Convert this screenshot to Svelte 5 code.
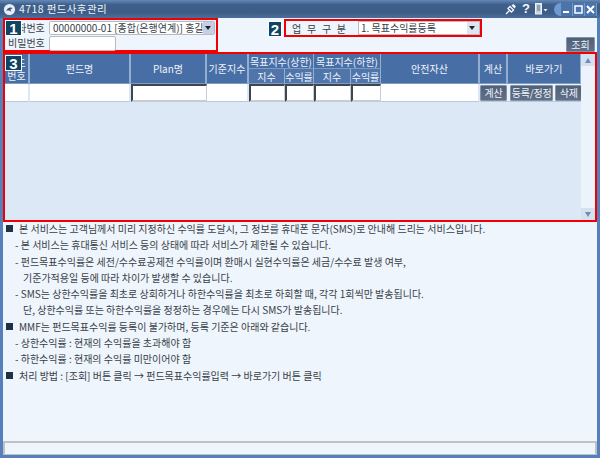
<script lang="ts">
  const notes = [
    { kind: "main", text: "본 서비스는 고객님께서 미리 지정하신 수익률 도달시, 그 정보를 휴대폰 문자(SMS)로 안내해 드리는 서비스입니다." },
    { kind: "minor", text: "- 본 서비스는 휴대통신 서비스 등의 상태에 따라 서비스가 제한될 수 있습니다." },
    { kind: "minor", text: "- 펀드목표수익률은 세전/수수료공제전 수익률이며 환매시 실현수익률은 세금/수수료 발생 여부," },
    { kind: "cont", text: "기준가적용일 등에 따라 차이가 발생할 수 있습니다." },
    { kind: "minor", text: "- SMS는 상한수익률을 최초로 상회하거나 하한수익률을 최초로 하회할 때, 각각 1회씩만 발송됩니다." },
    { kind: "cont", text: "단, 상한수익률 또는 하한수익률을 정정하는 경우에는 다시 SMS가 발송됩니다." },
    { kind: "main", text: "MMF는 펀드목표수익률 등록이 불가하며, 등록 기준은 아래와 같습니다." },
    { kind: "minor", text: "- 상한수익률 : 현재의 수익률을 초과해야 함" },
    { kind: "minor", text: "- 하한수익률 : 현재의 수익률 미만이어야 함" },
    { kind: "main", text: "처리 방법 : [조회] 버튼 클릭 → 펀드목표수익률입력 → 바로가기 버튼 클릭" }
  ];
</script>

<div class="window">
  <header class="titlebar">
    <svg class="app-icon" viewBox="0 0 14 14" aria-hidden="true">
      <circle cx="7" cy="7" r="6" fill="#e8eef6" />
      <path d="M3.5 8.5c1-3 4-4.500 7-3l-2.500 1.500 1 2.500c-2-1.500-3.500-1.500-5.500-1z" fill="#34547c" />
    </svg>
    <span class="title">4718 펀드사후관리</span>
    <div class="tools">
      <svg width="12" height="12" viewBox="0 0 12 12" aria-hidden="true">
        <path d="M1 11l3.500-3.500M7 2L10 5M5 3.500l3.500 3.500-2 2-3.500-3.500zM8 1.500l2.500 2.500" fill="none" stroke="#f2f5f9" stroke-width="1.400" />
      </svg>
      <span class="help">?</span>
      <svg width="13" height="12" viewBox="0 0 13 12" aria-hidden="true">
        <rect x="0.500" y="0.500" width="6" height="10.500" fill="#c9d3df" stroke="#eef2f7" />
        <path d="M2 3h3M2 5h3M2 7h3" stroke="#55708f" />
        <path d="M8.500 6h4l-2 2.500z" fill="#eef2f7" />
      </svg>
      <div class="win-buttons">
        <span class="win-btn">
          <svg width="9" height="9" viewBox="0 0 9 9" aria-hidden="true"><rect x="1" y="6" width="6" height="2" fill="#fff" /></svg>
        </span>
        <span class="win-btn">
          <svg width="9" height="9" viewBox="0 0 9 9" aria-hidden="true"><rect x="1" y="1" width="7" height="7" fill="none" stroke="#fff" stroke-width="1.500" /></svg>
        </span>
        <span class="win-btn">
          <svg width="9" height="9" viewBox="0 0 9 9" aria-hidden="true"><path d="M1 1l7 7M8 1l-7 7" stroke="#fff" stroke-width="2" /></svg>
        </span>
      </div>
    </div>
  </header>

  <section class="filters">
    <div class="box-one">
      <span class="badge badge-one">1</span>
      <div class="field-row">
        <span class="label">계좌번호</span>
        <div class="select account">
          <span class="select-text">00000000-01 [종합(은행연계)] 홍길동</span>
          <span class="arrow"></span>
        </div>
      </div>
      <div class="field-row">
        <span class="label">비밀번호</span>
        <div class="password"></div>
      </div>
    </div>

    <div class="work-area">
      <span class="badge-two">2</span>
      <div class="box-two">
        <span class="work-label">업 무 구 분</span>
        <div class="select work">
          <span class="select-text">1. 목표수익률등록</span>
          <span class="arrow"></span>
        </div>
      </div>
    </div>

    <button class="btn search">조회</button>
  </section>

  <section class="box-three">
    <span class="badge badge-three">3</span>
    <div class="table-wrap">
      <div class="grid">
        <div class="th span2 stacked">펀드<br />번호</div>
        <div class="th span2">펀드명</div>
        <div class="th span2">Plan명</div>
        <div class="th span2">기준지수</div>
        <div class="th wide">목표지수(상한)</div>
        <div class="th wide">목표지수(하한)</div>
        <div class="th span2">안전자산</div>
        <div class="th span2">계산</div>
        <div class="th span2">바로가기</div>
        <div class="th sub">지수</div>
        <div class="th sub">수익률</div>
        <div class="th sub">지수</div>
        <div class="th sub">수익률</div>

        <div class="td"></div>
        <div class="td"></div>
        <div class="td input"></div>
        <div class="td"></div>
        <div class="td input"></div>
        <div class="td input"></div>
        <div class="td input"></div>
        <div class="td input"></div>
        <div class="td"></div>
        <div class="td action"><button class="btn calc">계산</button></div>
        <div class="td action">
          <button class="btn edit">등록/정정</button>
          <button class="btn del">삭제</button>
        </div>
      </div>
      <div class="empty"></div>
    </div>
    <div class="scrollbar">
      <span class="scroll-btn"><span class="tri up"></span></span>
      <span class="scroll-btn"><span class="tri down"></span></span>
    </div>
  </section>

  <section class="notes">
    {#each notes as note}
      <p class="note {note.kind}">
        {#if note.kind === "main"}<span class="square"></span>{/if}{note.text}
      </p>
    {/each}
  </section>

  <footer class="status"></footer>
</div>

<style>
  :global(body) {
    margin: 0;
    background: #5480bb;
  }

  .window {
    box-sizing: border-box;
    display: flex;
    flex-direction: column;
    width: 600px;
    height: 458px;
    padding: 0 3px 3px;
    overflow: hidden;
    background: #5480bb;
    font-family: "Noto Sans CJK KR", "Noto Sans", sans-serif;
    font-size: 10px;
    color: #3a3f47;
  }

  .titlebar {
    display: flex;
    align-items: center;
    flex: 0 0 18px;
    margin: 0 -3px;
    padding: 0 3px;
    background: linear-gradient(180deg, #6489b8 0, #3f608c 25%, #3d5c86 70%, #4c6f9e 100%);
    color: #eef3f9;
  }

  .app-icon {
    width: 13px;
    height: 13px;
    margin-right: 3px;
  }

  .title {
    font-size: 10.500px;
    line-height: 18px;
    letter-spacing: 0.4px;
  }

  .tools {
    display: flex;
    align-items: center;
    gap: 4px;
    margin-left: auto;
  }

  .help {
    width: 10px;
    font-family: "Liberation Sans", sans-serif;
    font-size: 13px;
    font-weight: 700;
    color: #f4f6f9;
    text-align: center;
    line-height: 14px;
  }

  .win-buttons {
    display: flex;
    gap: 1px;
    margin-left: 2px;
    padding: 0 1px 0 7px;
    border-radius: 8px 0 0 8px;
    background: #6f9ad2;
  }

  .win-btn {
    display: flex;
    align-items: center;
    justify-content: center;
    width: 11px;
    height: 13px;
    background: #4b74aa;
  }

  .filters {
    position: relative;
    display: flex;
    flex: 0 0 34px;
    background: #eef5fc;
  }

  .box-one {
    position: relative;
    box-sizing: border-box;
    display: flex;
    flex-direction: column;
    gap: 1px;
    width: 215px;
    height: 34px;
    padding: 1px 0 0 3px;
    border: 2px solid #f00000;
  }

  .field-row {
    display: flex;
    align-items: center;
    gap: 5px;
    height: 14px;
  }

  .label {
    width: 36px;
    font-size: 10px;
    line-height: 14px;
    white-space: nowrap;
  }

  .select {
    box-sizing: border-box;
    display: flex;
    align-items: center;
    height: 14px;
    border: 1px solid #b5bcc6;
    border-radius: 2px;
    background: #fff;
  }

  .select-text {
    flex: 1;
    min-width: 0;
    overflow: hidden;
    padding-left: 3px;
    font-size: 10px;
    line-height: 12px;
    white-space: nowrap;
  }

  .account {
    width: 166px;
  }

  .arrow {
    position: relative;
    flex: 0 0 11px;
    height: 12px;
    background: #c7cfe4;
  }

  .arrow::after {
    content: "";
    position: absolute;
    top: 4px;
    left: 2px;
    border: 3.500px solid transparent;
    border-top: 4px solid #1d2330;
    border-bottom: 0;
  }

  .password {
    box-sizing: border-box;
    width: 67px;
    height: 15px;
    border: 1px solid #b5bcc6;
    border-radius: 2px;
    background: #fff;
  }

  .badge,
  .badge-two {
    display: flex;
    align-items: center;
    justify-content: center;
    box-sizing: border-box;
    border: 1px solid #fff;
    background: #0f4564;
    color: #fff;
    font-family: "Liberation Sans", sans-serif;
    font-size: 15px;
    font-weight: 700;
  }

  .badge {
    position: absolute;
    z-index: 2;
    width: 17px;
    height: 16px;
  }

  .badge-one {
    top: 0;
    left: 0;
  }

  .badge-three {
    top: 1px;
    left: 0;
  }

  .work-area {
    display: flex;
    gap: 2px;
    margin: 1px 0 0 50px;
    height: 18px;
  }

  .badge-two {
    width: 14px;
    height: 16px;
    margin-top: 2px;
  }

  .box-two {
    box-sizing: border-box;
    display: flex;
    align-items: center;
    width: 198px;
    height: 18px;
    padding-left: 6px;
    border: 2px solid #f00000;
  }

  .work-label {
    width: 66px;
    font-size: 10px;
    white-space: nowrap;
    word-spacing: 3.500px;
  }

  .work {
    width: 122px;
    border-radius: 0;
  }

  .work .select-text {
    padding-left: 2px;
  }

  .work .arrow {
    flex-basis: 12px;
    background: #dfe5ef;
  }

  .btn {
    box-sizing: border-box;
    height: 14px;
    padding: 0;
    border: 1px solid #8392a6;
    border-radius: 1px;
    background: linear-gradient(180deg, #4f6079, #5f7088);
    color: #eef2f6;
    font-family: inherit;
    font-size: 10px;
    line-height: 11px;
  }

  .search {
    width: 29px;
    height: 15px;
    margin: 19px 2px 0 auto;
  }

  .box-three {
    position: relative;
    box-sizing: border-box;
    display: flex;
    flex: 0 0 170px;
    border: 2px solid #f00000;
    background: #dde8f7;
  }

  .table-wrap {
    display: flex;
    flex: 1;
    flex-direction: column;
    min-width: 0;
  }

  .grid {
    display: grid;
    grid-template-columns: 25px 101px 76px 42px 36px 29px 37px 30px 99px 28px 74px;
    grid-template-rows: 15px 15px 18px;
  }

  .th {
    box-sizing: border-box;
    display: flex;
    align-items: center;
    justify-content: center;
    border-right: 1px solid #93aed0;
    border-bottom: 1px solid #7c9cc4;
    background: #486ea6;
    color: #eef3fa;
    font-size: 10px;
    white-space: nowrap;
    overflow: hidden;
  }

  .span2 {
    grid-row: span 2;
    border-right-width: 2px;
  }

  .stacked {
    line-height: 13px;
    text-align: center;
    padding-top: 1px;
  }

  .wide {
    grid-column: span 2;
  }

  .sub {
    grid-row: 2;
    background: #4f75ab;
  }

  .th:nth-child(10) {
    grid-column: 5;
  }

  .th:nth-child(11) {
    grid-column: 6;
  }

  .th:nth-child(12) {
    grid-column: 7;
  }

  .th:nth-child(13) {
    grid-column: 8;
  }

  .td {
    box-sizing: border-box;
    grid-row: 3;
    border-right: 2px solid #dde8f7;
    border-bottom: 1px solid #b9c9de;
    background: #fff;
  }

  .input {
    border-top: 2px solid #3f4650;
    border-left: 2px solid #3f4650;
    border-right: 1px solid #c8ced6;
    border-bottom: 2px solid #c6ccd4;
  }

  .action {
    display: flex;
    gap: 2px;
    align-items: center;
    background: #eef3fa;
    border-right: 0;
  }

  .action .btn {
    height: 16px;
    font-size: 10px;
    letter-spacing: -0.2px;
  }

  .calc {
    width: 27px;
  }

  .edit {
    width: 44px;
    margin-left: 2px;
  }

  .del {
    width: 27px;
  }

  .empty {
    flex: 1;
    background: #dde8f7;
  }

  .scrollbar {
    display: flex;
    flex: 0 0 14px;
    flex-direction: column;
    justify-content: space-between;
    background: #ecf3fb;
  }

  .scroll-btn {
    display: flex;
    align-items: center;
    justify-content: center;
    height: 12px;
    background: #d6e1f0;
  }

  .tri {
    border: 3.500px solid transparent;
  }

  .tri.up {
    border-top: 0;
    border-bottom: 5px solid #6f8db5;
  }

  .tri.down {
    border-bottom: 0;
    border-top: 5px solid #6f8db5;
  }

  .notes {
    display: flex;
    flex: 1;
    flex-direction: column;
    gap: 3.300px;
    background: #eef5fc;
  }

  .note {
    height: 13px;
    margin: 0;
    font-size: 10px;
    line-height: 13px;
    white-space: nowrap;
  }

  .main {
    display: flex;
    align-items: center;
    padding-left: 3px;
  }

  .minor {
    padding-left: 12px;
  }

  .cont {
    padding-left: 20px;
  }

  .square {
    flex: 0 0 7px;
    width: 7px;
    height: 7px;
    margin-right: 6px;
    background: #1f3147;
  }

  .status {
    box-sizing: border-box;
    flex: 0 0 14px;
    border: 2px solid #c2c2c2;
    border-bottom-width: 1px;
    background: #eef5fc;
  }
</style>
